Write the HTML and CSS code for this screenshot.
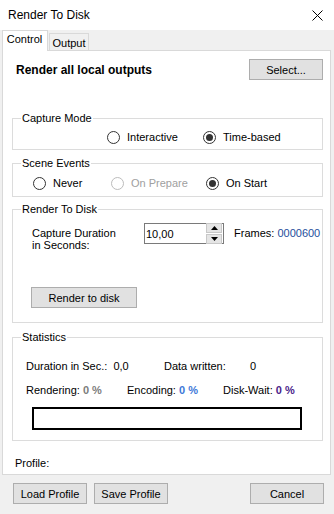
FILE: index.html
```html
<!DOCTYPE html>
<html lang="en">
<head>
    <meta charset="UTF-8">
    <meta name="viewport" content="width=device-width, initial-scale=1.0">
    <title>Render To Disk</title>
    <link rel="stylesheet" href="styles.css">
</head>
<body>
    <div class="window">
        <div class="titlebar">
            <span class="title">Render To Disk</span>
            <svg class="close" width="11" height="11" viewBox="0 0 11 11">
                <path d="M0.5 0.5 L10.5 10.5 M10.5 0.5 L0.5 10.5" stroke="#000" stroke-width="1" fill="none"/>
            </svg>
        </div>

        <div class="tabs">
            <div class="tab active">Control</div>
            <div class="tab tab-output">Output</div>
        </div>

        <div class="page">
            <div class="top-row">
                <span class="heading">Render all local outputs</span>
                <button class="button select-button">Select...</button>
            </div>

            <fieldset class="group capture-mode">
                <legend>Capture Mode</legend>
                <div class="radio-row">
                    <label class="option opt-interactive"><span class="radio"></span>Interactive</label>
                    <label class="option"><span class="radio checked"></span>Time-based</label>
                </div>
            </fieldset>

            <fieldset class="group scene-events">
                <legend>Scene Events</legend>
                <div class="radio-row">
                    <label class="option opt-never"><span class="radio"></span>Never</label>
                    <label class="option opt-prepare disabled"><span class="radio"></span>On Prepare</label>
                    <label class="option"><span class="radio checked"></span>On Start</label>
                </div>
            </fieldset>

            <fieldset class="group render-disk">
                <legend>Render To Disk</legend>
                <div class="duration-row">
                    <div class="duration-label">Capture Duration<br>in Seconds:</div>
                    <div class="spinner">
                        <span class="spinner-value">10,00</span>
                        <div class="spin-buttons">
                            <span class="spin-btn">
                                <svg width="7" height="4" viewBox="0 0 7 4"><path d="M3.5 0 L7 4 L0 4 Z" fill="#000"/></svg>
                            </span>
                            <span class="spin-btn">
                                <svg width="7" height="4" viewBox="0 0 7 4"><path d="M0 0 L7 0 L3.5 4 Z" fill="#000"/></svg>
                            </span>
                        </div>
                    </div>
                    <div class="frames">Frames: <span class="frames-value">0000600</span></div>
                </div>
                <button class="button render-button">Render to disk</button>
            </fieldset>

            <fieldset class="group statistics">
                <legend>Statistics</legend>
                <div class="stat-row">
                    <span class="stat-duration">Duration in Sec.:&nbsp; 0,0</span>
                    <span class="stat-data">Data written:</span>
                    <span>0</span>
                </div>
                <div class="stat-row">
                    <span class="stat-rendering">Rendering: <b class="pct pct-gray">0 %</b></span>
                    <span class="stat-encoding">Encoding: <b class="pct pct-blue">0 %</b></span>
                    <span>Disk-Wait: <b class="pct pct-purple">0 %</b></span>
                </div>
                <div class="progress"></div>
            </fieldset>

            <div class="profile">Profile:</div>
        </div>

        <div class="footer">
            <button class="button footer-button">Load Profile</button>
            <button class="button footer-button">Save Profile</button>
            <button class="button footer-button cancel-button">Cancel</button>
        </div>
    </div>
</body>
</html>
```

FILE: styles.css
```css
body {
    margin: 0;
    padding: 0;
    font-family: 'Liberation Sans', Arial, sans-serif;
    font-size: 11px;
    color: #000;
    background: #f0f0f0;
}
.window {
    width: 334px;
    height: 514px;
    background: #f0f0f0;
}
.titlebar {
    height: 30px;
    background: #fff;
    display: flex;
    align-items: center;
    padding: 0 11px 0 8px;
    font-size: 12px;
}
.close {
    margin-left: auto;
}
.tabs {
    height: 20px;
    display: flex;
    align-items: flex-end;
    padding-left: 2px;
}
.tab {
    box-sizing: border-box;
    height: 17px;
    border: 1px solid #d9d9d9;
    border-bottom: none;
    line-height: 16px;
    text-align: center;
    background: #f0f0f0;
}
.tab.active {
    width: 46px;
    height: 21px;
    line-height: 16px;
    padding-right: 1px;
    background: #fff;
    position: relative;
    z-index: 1;
    margin-bottom: -1px;
}
.tab-output {
    width: 40px;
    margin-left: 1px;
    padding-top: 1px;
}
.page {
    box-sizing: border-box;
    height: 425px;
    margin: 0 3px 0 2px;
    background: #fff;
    border: 1px solid #d9d9d9;
    padding: 0 7px 0 9px;
}
.top-row {
    margin-top: 8px;
    height: 21px;
    display: flex;
    align-items: center;
    justify-content: space-between;
    padding-left: 4px;
}
.heading {
    font-weight: bold;
    font-size: 12px;
}
.button {
    font-family: inherit;
    font-size: 11px;
    color: #000;
    background: #e1e1e1;
    border: 1px solid #adadad;
    height: 21px;
    padding: 0;
    margin: 0;
}
.select-button {
    width: 74px;
}
.group {
    box-sizing: border-box;
    margin: 0;
    padding: 0;
    border: 1px solid #dcdcdc;
}
.group legend {
    padding: 0 1px;
    margin-left: 8px;
    line-height: 14px;
}
.capture-mode {
    margin-top: 31px;
    height: 39px;
}
.scene-events {
    margin-top: 6px;
    height: 41px;
}
.render-disk {
    margin-top: 5px;
    height: 121px;
}
.statistics {
    margin-top: 7px;
    height: 111px;
}
.radio-row {
    display: flex;
    align-items: center;
    height: 14px;
}
.capture-mode .radio-row {
    margin-top: 5px;
    padding-left: 94px;
}
.scene-events .radio-row {
    margin-top: 6px;
    padding-left: 20px;
}
.option {
    display: flex;
    align-items: center;
}
.opt-interactive {
    width: 96px;
}
.opt-never {
    width: 78px;
}
.opt-prepare {
    width: 95px;
}
.radio {
    box-sizing: border-box;
    width: 13px;
    height: 13px;
    border: 1px solid #333;
    border-radius: 50%;
    margin-right: 7px;
    display: flex;
    align-items: center;
    justify-content: center;
    background: #fff;
}
.radio.checked::after {
    content: '';
    width: 7px;
    height: 7px;
    border-radius: 50%;
    background: #333;
}
.disabled {
    color: #a0a0a0;
}
.disabled .radio {
    border-color: #bcbcbc;
}
.duration-row {
    display: flex;
    align-items: flex-start;
    margin-top: 7px;
    padding-left: 19px;
}
.duration-label {
    width: 112px;
    line-height: 12px;
    padding-top: 4px;
    white-space: nowrap;
}
.spinner {
    box-sizing: border-box;
    width: 80px;
    height: 21px;
    border: 1px solid #7a7a7a;
    display: flex;
    align-items: center;
    padding-left: 1px;
}
.spinner-value {
    flex: 1;
}
.spin-buttons {
    display: flex;
    flex-direction: column;
    gap: 1px;
    margin-right: 1px;
}
.spin-btn {
    width: 14px;
    height: 8px;
    background: #e5e5e5;
    border: 1px solid #c8c8c8;
    display: flex;
    align-items: center;
    justify-content: center;
}
.frames {
    margin-left: 10px;
    padding-top: 4px;
    white-space: nowrap;
}
.frames-value {
    color: #1e4e9c;
}
.render-button {
    display: block;
    width: 106px;
    margin: 36px 0 0 18px;
}
.stat-row {
    display: flex;
    padding-left: 13px;
    height: 14px;
    line-height: 14px;
}
.stat-row:first-of-type {
    margin-top: 15px;
}
.stat-row + .stat-row {
    margin-top: 10px;
}
.stat-duration {
    width: 138px;
}
.stat-data {
    width: 86px;
}
.stat-rendering {
    width: 101px;
}
.stat-encoding {
    width: 96px;
}
.pct {
    font-weight: bold;
}
.pct-gray {
    color: #7c7c7c;
}
.pct-blue {
    color: #3d78d8;
}
.pct-purple {
    color: #4b1d8a;
}
.progress {
    box-sizing: border-box;
    width: 270px;
    height: 23px;
    border: 2px solid #000;
    margin: 10px 0 0 19px;
}
.profile {
    margin-top: 16px;
    padding-left: 3px;
}
.footer {
    display: flex;
    padding: 8px 10px 0 13px;
}
.footer-button {
    width: 74px;
    margin-right: 7px;
}
.cancel-button {
    margin-left: auto;
    margin-right: 0;
}
```
